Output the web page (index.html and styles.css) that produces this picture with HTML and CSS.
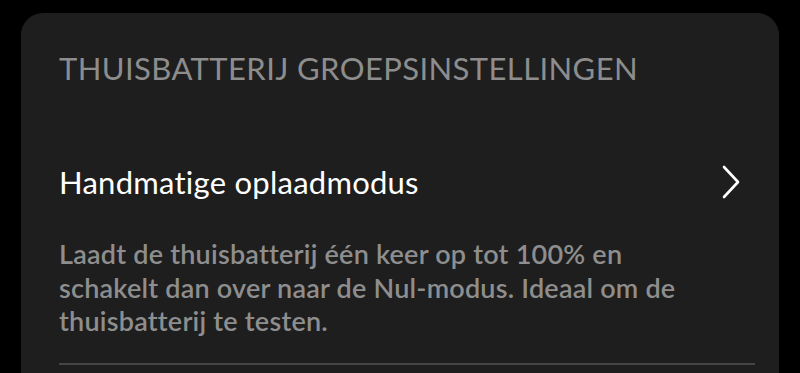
FILE: index.html
```html
<!DOCTYPE html>
<html lang="nl">
<head>
<meta charset="utf-8">
<title>Thuisbatterij groepsinstellingen</title>
<link rel="stylesheet" href="styles.css">
</head>
<body>
<section class="card">
  <h2 class="card-title">THUISBATTERIJ GROEPSINSTELLINGEN</h2>
  <div class="setting">
    <div class="setting-row">
      <span class="setting-label">Handmatige oplaadmodus</span>
      <svg class="chevron" width="20" height="34" viewBox="0 0 20 34" aria-hidden="true">
        <path d="M3 2 L17 17 L3 32" fill="none" stroke="#ffffff" stroke-width="2.6" stroke-linecap="round" stroke-linejoin="round"/>
      </svg>
    </div>
    <p class="setting-desc">Laadt de thuisbatterij één keer op tot 100% en schakelt dan over naar de Nul-modus. Ideaal om de thuisbatterij te testen.</p>
  </div>
  <div class="divider"></div>
</section>
</body>
</html>
```

FILE: styles.css
```css
html, body {
  margin: 0;
  padding: 0;
  background: #000;
  height: 100%;
  overflow: hidden;
}

body {
  padding: 13px 21px 0 21px;
  box-sizing: border-box;
  font-family: Lato, "Open Sans", sans-serif;
}

.card {
  background: #1e1e1e;
  border-radius: 22px 22px 0 0;
  padding: 37px 24px 40px 38px;
  min-height: 500px;
  box-sizing: border-box;
}

.card-title {
  margin: 0;
  font-size: 31px;
  line-height: 36px;
  font-weight: 400;
  color: #8d8d8d;
  letter-spacing: 0.4px;
}

.setting {
  margin-top: 78px;
  display: flex;
  flex-direction: column;
}

.setting-row {
  display: flex;
  align-items: center;
  justify-content: space-between;
  height: 36px;
}

.setting-label {
  font-size: 31px;
  line-height: 36px;
  color: #ffffff;
  font-weight: 400;
  letter-spacing: 0.25px;
}

.chevron {
  margin-right: 14px;
  flex: none;
}

.setting-desc {
  margin: 37px 0 0 0;
  max-width: 645px;
  font-size: 27px;
  line-height: 33.5px;
  font-weight: 600;
  color: #8e8e8e;
  letter-spacing: 0.22px;
}

.divider {
  margin-top: 25px;
  height: 2px;
  background: #454545;
}
```
